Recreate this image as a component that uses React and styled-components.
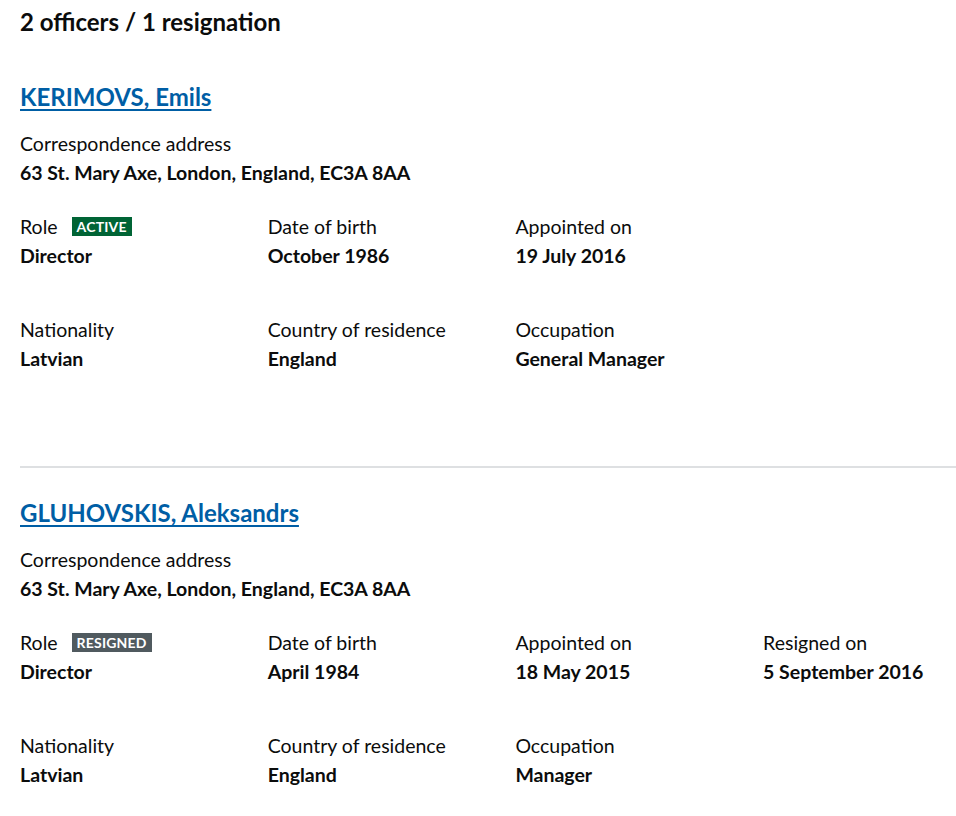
import React from "react";
import styled, { createGlobalStyle } from "styled-components";

const GlobalStyle = createGlobalStyle`
  body {
    margin: 0;
    background: #fff;
    color: #0b0c0c;
    font-family: Lato, "Open Sans", Arial, sans-serif;
  }
`;

const Page = styled.div`
  padding: 0 0 0 20px;
  overflow: hidden;
`;

const Heading = styled.h2`
  font-size: 24px;
  font-weight: 700;
  margin: 0;
  padding-top: 8px;
  line-height: 28px;
`;

const Officer = styled.section`
  padding-top: ${(p) => (p.first ? "46px" : "30px")};
  padding-bottom: ${(p) => (p.last ? "20px" : "93px")};
  border-bottom: ${(p) => (p.last ? "none" : "2px solid #dee0e2")};
`;

const NameLink = styled.a`
  display: inline-block;
  font-size: 24px;
  font-weight: 700;
  line-height: 30px;
  color: #005ea5;
  text-decoration: underline;
  text-decoration-thickness: 2px;
  text-underline-offset: 3px;
  margin-bottom: 17px;
`;

const Label = styled.div`
  display: flex;
  align-items: center;
  gap: 14px;
  font-size: 19.5px;
  line-height: 29px;
`;

const Value = styled.div`
  font-size: 19.5px;
  font-weight: 700;
  line-height: 29px;
`;

const Address = styled.div`
  margin-bottom: 25px;
`;

const Row = styled.div`
  display: grid;
  grid-template-columns: repeat(4, 247.7px);
  margin-bottom: ${(p) => p.gap || "0"};
`;

const Badge = styled.span`
  display: inline-block;
  background: ${(p) => (p.status === "active" ? "#006435" : "#505a5f")};
  color: #fff;
  font-size: 14px;
  font-weight: 700;
  line-height: 19px;
  padding: 0 5px;
  letter-spacing: 0.2px;
`;

const Field = ({ label, value, badge }) => (
  <div>
    <Label>
      {label}
      {badge && <Badge status={badge.toLowerCase()}>{badge}</Badge>}
    </Label>
    <Value>{value}</Value>
  </div>
);

const officers = [
  {
    name: "KERIMOVS, Emils",
    status: "ACTIVE",
    dob: "October 1986",
    appointed: "19 July 2016",
    nationality: "Latvian",
    residence: "England",
    occupation: "General Manager",
  },
  {
    name: "GLUHOVSKIS, Aleksandrs",
    status: "RESIGNED",
    dob: "April 1984",
    appointed: "18 May 2015",
    resigned: "5 September 2016",
    nationality: "Latvian",
    residence: "England",
    occupation: "Manager",
  },
];

export default function App() {
  return (
    <>
      <GlobalStyle />
      <Page>
        <Heading>2 officers / 1 resignation</Heading>
        {officers.map((o, i) => (
          <Officer key={o.name} first={i === 0} last={i === officers.length - 1}>
            <NameLink href="#">{o.name}</NameLink>
            <Address>
              <Label>Correspondence address</Label>
              <Value>63 St. Mary Axe, London, England, EC3A 8AA</Value>
            </Address>
            <Row gap="45px">
              <Field label="Role" badge={o.status} value="Director" />
              <Field label="Date of birth" value={o.dob} />
              <Field label="Appointed on" value={o.appointed} />
              {o.resigned && <Field label="Resigned on" value={o.resigned} />}
            </Row>
            <Row>
              <Field label="Nationality" value={o.nationality} />
              <Field label="Country of residence" value={o.residence} />
              <Field label="Occupation" value={o.occupation} />
            </Row>
          </Officer>
        ))}
      </Page>
    </>
  );
}
